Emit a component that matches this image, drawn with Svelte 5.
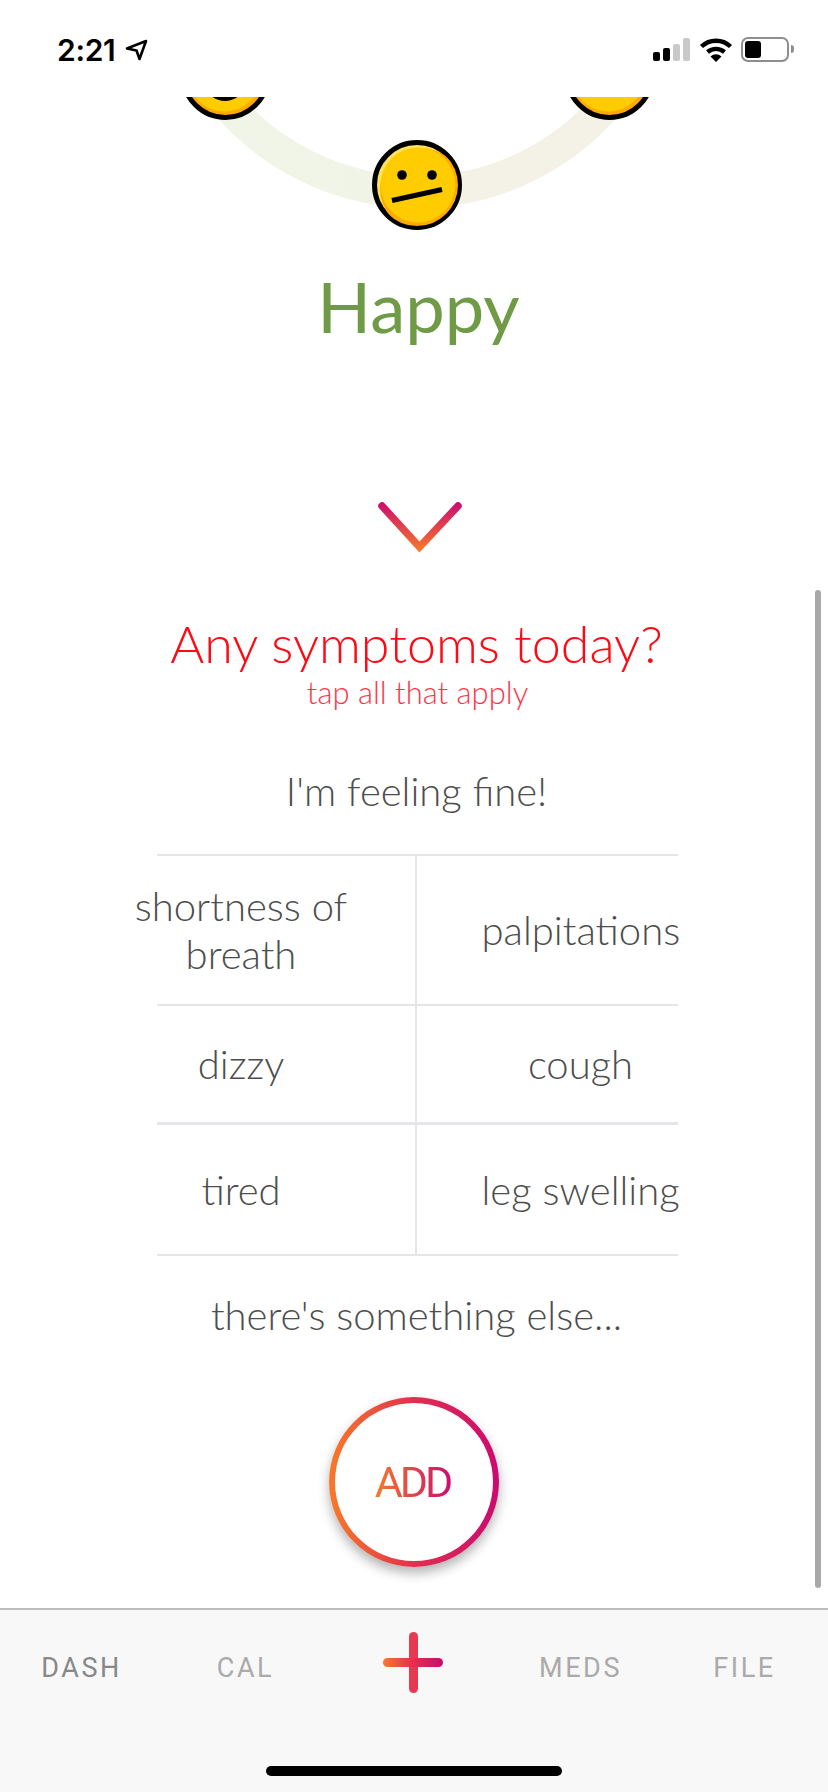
<script>
	const rows = [
		['shortness of breath', 'palpitations'],
		['dizzy', 'cough'],
		['tired', 'leg swelling']
	];
	const tabs = ['DASH', 'CAL', '+', 'MEDS', 'FILE'];
	const faces = [225.5, 609.5];
</script>

<div class="phone">
	<header class="status">
		<div class="clock">
			<span>2:21</span>
			<svg width="23" height="22" viewBox="0 0 23 22">
				<path d="M2 9.5 L21 2 L14.5 20 L11.5 11.5 Z" fill="none" stroke="#000" stroke-width="2.6" stroke-linejoin="round" />
			</svg>
		</div>
		<div class="indicators">
			<div class="signal">
				<i class="b1"></i><i class="b2"></i><i class="b3 off"></i><i class="b4 off"></i>
			</div>
			<svg class="wifi" width="34" height="25" viewBox="0 0 34 25">
				<path d="M2.5 9.5 A21 21 0 0 1 31.5 9.5" fill="none" stroke="#000" stroke-width="4.4" />
				<path d="M8.5 15 A13 13 0 0 1 25.5 15" fill="none" stroke="#000" stroke-width="4.4" />
				<path d="M11.5 19.5 L17 25 L22.5 19.5 A8 8 0 0 0 11.5 19.5 Z" fill="#000" />
			</svg>
			<div class="battery"><div class="charge"></div></div>
			<div class="cap"></div>
		</div>
	</header>

	<main class="content">
		<svg class="dial" width="828" height="143" viewBox="0 97 828 143">
			<defs>
				<linearGradient id="band" x1="0" x2="1" y1="0" y2="0">
					<stop offset="0" stop-color="#f0f5e7" />
					<stop offset="0.45" stop-color="#f0f4e6" />
					<stop offset="0.55" stop-color="#f4f1e6" />
					<stop offset="1" stop-color="#f4f1e6" />
				</linearGradient>
				<clipPath id="face-mid"><circle cx="417" cy="185" r="41" /></clipPath>
				<clipPath id="face-l"><circle cx="225.5" cy="75" r="41" /></clipPath>
				<clipPath id="face-r"><circle cx="609.5" cy="75" r="41" /></clipPath>
			</defs>
			<path d="M225 102 A250 250 0 0 0 609 102" fill="none" stroke="url(#band)" stroke-width="32" />

			{#each faces as cx, i}
				<circle {cx} cy="75" r="42.5" fill="#ffa800" stroke="#000" stroke-width="5" />
				<circle cx={cx - 1} cy="74" r="37.5" fill="#ffcc00" clip-path={i === 0 ? 'url(#face-l)' : 'url(#face-r)'} />
			{/each}
			<path d="M213 95 Q225 103 237 95" fill="none" stroke="#000" stroke-width="4" />

			<circle cx="417" cy="185" r="42.5" fill="#ffe35c" stroke="#000" stroke-width="5" />
			<circle cx="421" cy="189" r="41" fill="#ffa800" clip-path="url(#face-mid)" />
			<circle cx="418" cy="185" r="37.5" fill="#ffcc00" />
			<circle cx="402" cy="175" r="4.8" fill="#000" />
			<circle cx="432" cy="175" r="4.8" fill="#000" />
			<path d="M392 200.5 L442 189.5" stroke="#000" stroke-width="5" />
		</svg>

		<h1 class="mood">Happy</h1>

		<svg class="chevron" width="90" height="54" viewBox="0 0 90 54">
			<defs>
				<linearGradient id="chev" gradientUnits="userSpaceOnUse" x1="0" x2="0" y1="2" y2="51">
					<stop offset="0" stop-color="#cc0a70" />
					<stop offset="1" stop-color="#f67a2a" />
				</linearGradient>
			</defs>
			<path d="M7 6 L44.5 47 L83 6" fill="none" stroke="url(#chev)" stroke-width="7.5" stroke-linecap="round" />
		</svg>

		<h2 class="question">Any symptoms today?</h2>
		<p class="hint">tap all that apply</p>

		<p class="option fine">I'm feeling fine!</p>

		<div class="grid">
			{#each rows as row, r}
				<div class="row row{r}">
					<div class="cell left"><span>{row[0]}</span></div>
					<div class="cell right"><span>{row[1]}</span></div>
				</div>
			{/each}
		</div>

		<p class="option else">there's something else...</p>

		<button class="add"><span class="face"><span class="label">ADD</span></span></button>
	</main>

	<div class="scrollbar"></div>

	<nav class="tabbar">
		<div class="tabs">
			{#each tabs as tab, i}
				{#if tab === '+'}
					<div class="plus"><i class="v"></i><i class="h"></i></div>
				{:else}
					<span class="tab t{i}">{tab}</span>
				{/if}
			{/each}
		</div>
		<div class="home"></div>
	</nav>
</div>

<style>
:global(body) {
	margin: 0;
	background: #fff;
}

.phone {
	position: relative;
	width: 828px;
	height: 1792px;
	display: flex;
	flex-direction: column;
	overflow: hidden;
	font-family: 'Lato', 'Liberation Sans', sans-serif;
	background: #fff;
}

.status {
	height: 97px;
	flex: none;
	display: flex;
	justify-content: space-between;
	padding: 33px 34px 0 57px;
	box-sizing: border-box;
}

.clock {
	display: flex;
	align-items: flex-start;
	gap: 10px;
	height: 36px;
	font-family: 'Inter', 'Liberation Sans', sans-serif;
	font-weight: 600;
	font-size: 30px;
	line-height: 34px;
	letter-spacing: -0.3px;
	color: #000;
}

.clock svg {
	margin-top: 6px;
}

.indicators {
	display: flex;
	align-items: flex-start;
	height: 30px;
}

.signal {
	display: flex;
	align-items: flex-end;
	gap: 3px;
	height: 23px;
	margin-top: 5px;
}

.signal i {
	width: 7px;
	border-radius: 2px;
	background: #000;
}

.signal .off {
	background: #c9c9c9;
}

.b1 { height: 9px; }
.b2 { height: 13px; }
.b3 { height: 17px; }
.b4 { height: 23px; }

.wifi {
	margin: 4px 0 0 9px;
}

.battery {
	width: 48px;
	height: 25px;
	margin: 4px 0 0 8px;
	box-sizing: border-box;
	border: 2px solid #8e8e8e;
	border-radius: 7px;
	padding: 2px;
}

.charge {
	width: 16px;
	height: 100%;
	border-radius: 3px;
	background: #000;
}

.cap {
	width: 3px;
	height: 8px;
	margin: 12px 0 0 2px;
	background: #8e8e8e;
	border-radius: 0 3px 3px 0;
}

.content {
	flex: 1;
	display: flex;
	flex-direction: column;
	align-items: center;
}

.dial {
	display: block;
	flex: none;
}

.mood {
	margin: 24px 0 0 9px;
	font-weight: 400;
	font-size: 70.5px;
	line-height: 84px;
	color: #6f9a46;
}

.chevron {
	display: block;
	margin-top: 152px;
	margin-left: 11px;
}

.question {
	margin: 58px 0 0 5px;
	font-weight: 300;
	font-size: 52px;
	line-height: 62px;
	color: #ff0a14;
}

.hint {
	margin: 0 0 0 7px;
	font-weight: 300;
	font-size: 31px;
	line-height: 36px;
	color: #ff3348;
}

.option {
	margin: 0 0 0 5px;
	font-weight: 300;
	font-size: 40px;
	line-height: 48px;
	color: #4d4d4d;
}

.fine {
	margin-top: 57px;
}

.grid {
	width: 521px;
	margin-top: 39px;
	margin-left: 7px;
	border-top: 2px solid #e6e6ea;
}

.row {
	display: flex;
	border-bottom: 2px solid #e6e6ea;
	box-sizing: border-box;
}

.row0 { height: 150px; }
.row1 { height: 119px; border-bottom-width: 3px; }
.row2 { height: 131px; }

.cell {
	display: flex;
	align-items: center;
	font-weight: 300;
	font-size: 40px;
	line-height: 48px;
	color: #4d4d4d;
	text-align: center;
}

.left {
	width: 260px;
	box-sizing: border-box;
	border-right: 2px solid #e6e6ea;
}

.left span {
	width: 230px;
	margin-left: -31px;
	flex: none;
}

.right {
	flex: 1;
	justify-content: flex-end;
}

.right span {
	width: 198px;
	margin-right: -1.5px;
	flex: none;
	white-space: nowrap;
}

.else {
	margin-top: 35px;
}

.add {
	width: 170px;
	height: 170px;
	margin-top: 58px;
	padding: 6px;
	border: 0;
	border-radius: 50%;
	background: linear-gradient(90deg, #f67a2a, #e0304f 50%, #cc0a70);
	box-shadow: 0 6px 12px rgba(0, 0, 0, 0.3);
	display: flex;
}

.face {
	flex: 1;
	border-radius: 50%;
	display: flex;
	align-items: center;
	justify-content: center;
	background: #fff;
}

.label {
	font-family: 'Roboto', sans-serif;
	font-weight: 400;
	font-size: 43px;
	letter-spacing: -3px;
	padding-right: 3px;
	background: linear-gradient(90deg, #f67a2a, #cc0a70);
	-webkit-background-clip: text;
	background-clip: text;
	color: transparent;
}

.scrollbar {
	position: absolute;
	right: 7px;
	top: 590px;
	width: 6px;
	height: 998px;
	border-radius: 3px;
	background: #a8a8a8;
}

.tabbar {
	height: 184px;
	flex: none;
	box-sizing: border-box;
	border-top: 2px solid #bdbdbd;
	background: #f8f8f8;
	display: flex;
	flex-direction: column;
	align-items: center;
}

.tabs {
	width: 100%;
	height: 156px;
	display: grid;
	grid-template-columns: 163px 165px 170px 165px 163px;
	justify-items: center;
	align-items: start;
	box-sizing: border-box;
	padding-top: 42px;
	font-family: 'Roboto', sans-serif;
	font-size: 27px;
	line-height: 32px;
	letter-spacing: 2.6px;
	color: #aaa;
}

.tab.t0 {
	color: #888;
}

.plus {
	position: relative;
	width: 60px;
	height: 61px;
	margin-top: -20px;
}

.plus i {
	position: absolute;
	display: block;
	border-radius: 5px;
}

.plus .v {
	left: 26px;
	top: 0;
	width: 9px;
	height: 61px;
	background: #e63a50;
}

.plus .h {
	left: 0;
	top: 26px;
	width: 60px;
	height: 9px;
	background: linear-gradient(90deg, #f67a2a, #e0304f 50%, #cc0a70);
}

.home {
	width: 296px;
	height: 10px;
	border-radius: 5px;
	background: #000;
}
</style>
